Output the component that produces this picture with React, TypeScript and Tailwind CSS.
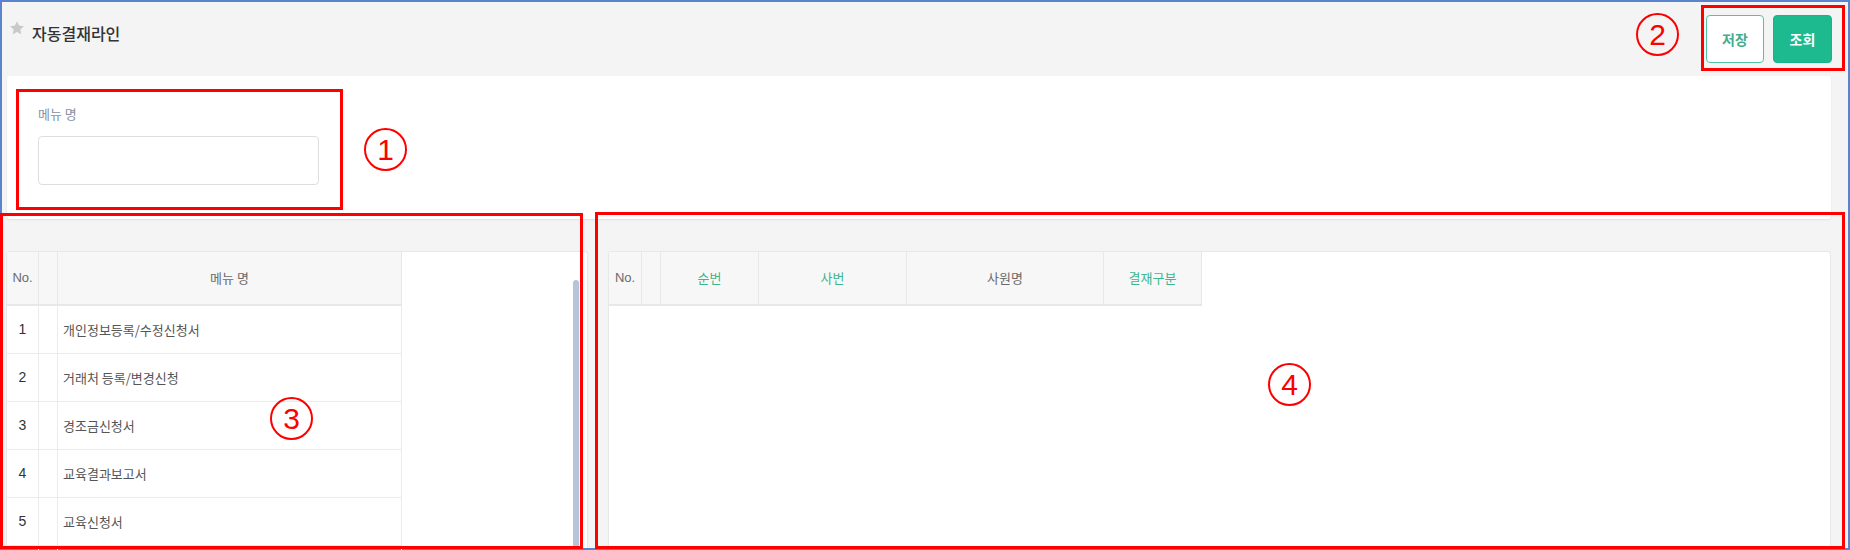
import React from 'react';

const font = { fontFamily: '"Noto Sans CJK KR", "Noto Sans", sans-serif' };

const menuRows = [
  { no: 1, name: '개인정보등록/수정신청서' },
  { no: 2, name: '거래처 등록/변경신청' },
  { no: 3, name: '경조금신청서' },
  { no: 4, name: '교육결과보고서' },
  { no: 5, name: '교육신청서' },
  { no: 6, name: '' },
];

function Circled({ n, className }: { n: number; className: string }) {
  return (
    <div
      className={`absolute w-[43px] h-[43px] rounded-full border-2 border-[#ff0000] flex items-center justify-center text-[#ff0000] text-[30px] leading-none ${className}`}
      style={{ fontFamily: '"Liberation Sans", Arial, sans-serif' }}
    >
      {n}
    </div>
  );
}

function Star() {
  return (
    <svg width="16" height="16" viewBox="0 0 24 24" className="shrink-0">
      <path
        d="M12 1.8l3.1 6.6 7.2.9-5.3 5 1.4 7.1L12 17.9l-6.4 3.5 1.4-7.1-5.3-5 7.2-.9z"
        fill="#c9c9c9"
      />
    </svg>
  );
}

export default function App() {
  return (
    <div className="relative w-[1850px] h-[550px] overflow-hidden" style={font}>
      <div className="flex flex-col w-full h-full border-2 border-[#5b84cf] bg-[#f4f4f4]">
        {/* header */}
        <div className="flex h-[74px] shrink-0 justify-between pl-[7px] pr-[16px]">
          <div className="flex items-start gap-[7px]">
            <div className="mt-[18px]">
              <Star />
            </div>
            <span className="mt-[21px] text-[16px] leading-[20px] font-medium text-[#333]">자동결재라인</span>
          </div>
          <div className="flex gap-[9px] pt-[13px]">
            <button className="w-[58px] h-[48px] rounded-[4px] border border-[#52c4a3] bg-white text-[14px] font-bold text-[#46ad8c]">
              저장
            </button>
            <button className="w-[59px] h-[48px] rounded-[4px] border border-[#17b48a] bg-[#1db98f] text-[14px] font-bold text-white">
              조회
            </button>
          </div>
        </div>

        {/* search panel */}
        <div className="ml-[5px] mr-[17px] h-[143px] shrink-0 rounded-[3px] bg-white shadow-[0_1px_2px_rgba(0,0,0,0.08)] pl-[31px] pt-[30px]">
          <div className="text-[13px] leading-[16px] text-[#8790a4]">메뉴 명</div>
          <div className="mt-[14px] w-[281px] h-[49px] rounded-[4px] border border-[#dedede] bg-white" />
        </div>

        {/* grids */}
        <div className="mt-[32px] flex flex-1 gap-[20px] pl-[4px] pr-[17px] min-h-0">
          <div className="flex w-[582px] rounded-t-[3px] border-t border-x border-[#e8e8e8] bg-white">
            <div className="w-[395px] shrink-0">
              <div className="flex h-[54px] bg-[#f7f7f7] border-b-2 border-[#e8e8e8] text-[#6a6a6a]">
                <div
                  className="w-[31px] flex items-center justify-center text-[13px]"
                  style={{ fontFamily: '"Liberation Sans Narrow", "Liberation Sans", sans-serif' }}
                >
                  No.
                </div>
                <div className="w-[20px] border-x border-[#e8e8e8]" />
                <div className="flex-1 flex items-center justify-center text-[13px] border-r border-[#e8e8e8]">메뉴 명</div>
              </div>
              {menuRows.map((r) => (
                <div key={r.no} className="flex h-[48px] border-b border-[#ebebeb] text-[#555]">
                  <div
                    className="w-[31px] flex items-center justify-center text-[14px] text-[#333]"
                    style={{ fontFamily: '"Liberation Sans Narrow", "Liberation Sans", sans-serif' }}
                  >
                    {r.name ? r.no : ''}
                  </div>
                  <div className="w-[20px] border-x border-[#ebebeb]" />
                  <div className="flex-1 flex items-center pl-[5px] text-[13px] border-r border-[#ebebeb]">{r.name}</div>
                </div>
              ))}
            </div>
            <div className="flex-1" />
            <div className="w-[6px] mt-[28px] mr-[8px] rounded-t-[3px] bg-[#b7c3d8]" />
          </div>

          <div className="flex-1 rounded-t-[3px] border-t border-x border-[#e8e8e8] bg-white">
            <div className="flex w-[593px] h-[54px] bg-[#f7f7f7] border-b-2 border-[#e8e8e8] text-[13px]">
              <div
                className="w-[32px] flex items-center justify-center text-[#6a6a6a]"
                style={{ fontFamily: '"Liberation Sans Narrow", "Liberation Sans", sans-serif' }}
              >
                No.
              </div>
              <div className="w-[20px] border-x border-[#e8e8e8]" />
              <div className="w-[98px] flex items-center justify-center border-r border-[#e8e8e8] text-[#3db58f]">순번</div>
              <div className="w-[148px] flex items-center justify-center border-r border-[#e8e8e8] text-[#3db58f]">사번</div>
              <div className="w-[197px] flex items-center justify-center border-r border-[#e8e8e8] text-[#6a6a6a]">사원명</div>
              <div className="w-[98px] flex items-center justify-center border-r border-[#e8e8e8] text-[#3db58f]">결재구분</div>
            </div>
          </div>
        </div>
      </div>

      {/* annotations */}
      <div className="absolute left-[16px] top-[89px] w-[327px] h-[121px] border-[3px] border-[#ff0000]" />
      <div className="absolute left-[1701px] top-[5px] w-[144px] h-[66px] border-[3px] border-[#ff0000]" />
      <div className="absolute left-0 top-[213px] w-[583px] h-[336px] border-[3px] border-[#ff0000]" />
      <div className="absolute left-[595px] top-[212px] w-[1250px] h-[337px] border-[3px] border-[#ff0000]" />
      <Circled n={1} className="left-[364px] top-[128px]" />
      <Circled n={2} className="left-[1636px] top-[13px]" />
      <Circled n={3} className="left-[270px] top-[397px]" />
      <Circled n={4} className="left-[1268px] top-[363px]" />
    </div>
  );
}
